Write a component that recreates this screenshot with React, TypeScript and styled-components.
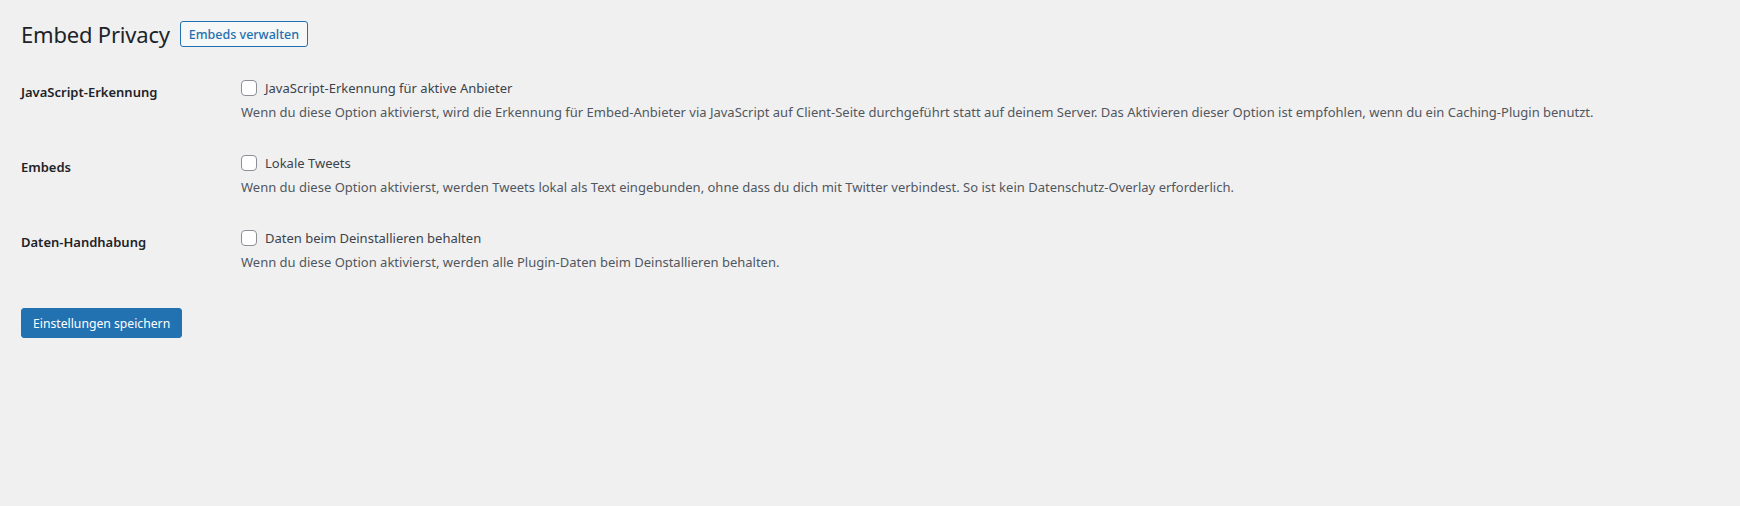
import React, { useState } from "react";
import styled, { createGlobalStyle } from "styled-components";

const GlobalStyle = createGlobalStyle`
  body {
    margin: 0;
    background: #f0f0f1;
    color: #3c434a;
    font-family: "Noto Sans", "Open Sans", sans-serif;
  }
`;

const Wrap = styled.div`
  padding: 19px 21px 40px;
`;

const HeaderRow = styled.div`
  display: flex;
  align-items: center;
  gap: 10px;
`;

const Title = styled.h1`
  margin: 0;
  font-size: 22px;
  font-weight: 400;
  line-height: 30px;
  color: #1d2327;
  letter-spacing: -0.2px;
`;

const ActionButton = styled.button`
  height: 26px;
  padding: 0 8px;
  border: 1px solid #2271b1;
  border-radius: 3px;
  background: #f6f7f7;
  color: #2271b1;
  font-family: inherit;
  font-size: 12.5px;
  font-weight: 500;
  cursor: pointer;
`;

const FormTable = styled.div`
  margin-top: 14px;
`;

const Row = styled.div`
  display: grid;
  grid-template-columns: 210px 1fr;
`;

const RowLabel = styled.div`
  padding: 20px 0;
  font-size: 13px;
  font-weight: 600;
  line-height: 18px;
  color: #1d2327;
`;

const RowField = styled.div`
  padding: 15px 10px;
`;

const CheckLabel = styled.label`
  display: flex;
  align-items: center;
  gap: 8px;
  font-size: 13px;
  line-height: 20px;
  color: #3c434a;
`;

const Checkbox = styled.input`
  appearance: none;
  margin: 0;
  width: 16px;
  height: 16px;
  border: 1px solid #8c8f94;
  border-radius: 4px;
  background: #fff;
  cursor: pointer;
  &:checked {
    background: #2271b1;
    border-color: #2271b1;
  }
`;

const Description = styled.p`
  margin: 4px 0 0;
  font-size: 13px;
  line-height: 21px;
  color: #50575e;
`;

const Submit = styled.div`
  margin-top: 20px;
`;

const PrimaryButton = styled.button`
  height: 30px;
  padding: 0 11px;
  border: 1px solid #2271b1;
  border-radius: 3px;
  background: #2271b1;
  color: #fff;
  font-family: inherit;
  font-size: 12.2px;
  cursor: pointer;
`;

const options = [
  {
    key: "js",
    label: "JavaScript-Erkennung",
    checkLabel: "JavaScript-Erkennung für aktive Anbieter",
    description:
      "Wenn du diese Option aktivierst, wird die Erkennung für Embed-Anbieter via JavaScript auf Client-Seite durchgeführt statt auf deinem Server. Das Aktivieren dieser Option ist empfohlen, wenn du ein Caching-Plugin benutzt.",
  },
  {
    key: "tweets",
    label: "Embeds",
    checkLabel: "Lokale Tweets",
    description:
      "Wenn du diese Option aktivierst, werden Tweets lokal als Text eingebunden, ohne dass du dich mit Twitter verbindest. So ist kein Datenschutz-Overlay erforderlich.",
  },
  {
    key: "data",
    label: "Daten-Handhabung",
    checkLabel: "Daten beim Deinstallieren behalten",
    description:
      "Wenn du diese Option aktivierst, werden alle Plugin-Daten beim Deinstallieren behalten.",
  },
];

const App = () => {
  const [values, setValues] = useState<Record<string, boolean>>({});

  return (
    <>
      <GlobalStyle />
      <Wrap>
        <HeaderRow>
          <Title>Embed Privacy</Title>
          <ActionButton>Embeds verwalten</ActionButton>
        </HeaderRow>
        <FormTable>
          {options.map((o) => (
            <Row key={o.key}>
              <RowLabel>{o.label}</RowLabel>
              <RowField>
                <CheckLabel>
                  <Checkbox
                    type="checkbox"
                    checked={!!values[o.key]}
                    onChange={(e) =>
                      setValues({ ...values, [o.key]: e.target.checked })
                    }
                  />
                  {o.checkLabel}
                </CheckLabel>
                <Description>{o.description}</Description>
              </RowField>
            </Row>
          ))}
        </FormTable>
        <Submit>
          <PrimaryButton>Einstellungen speichern</PrimaryButton>
        </Submit>
      </Wrap>
    </>
  );
};

export default App;
